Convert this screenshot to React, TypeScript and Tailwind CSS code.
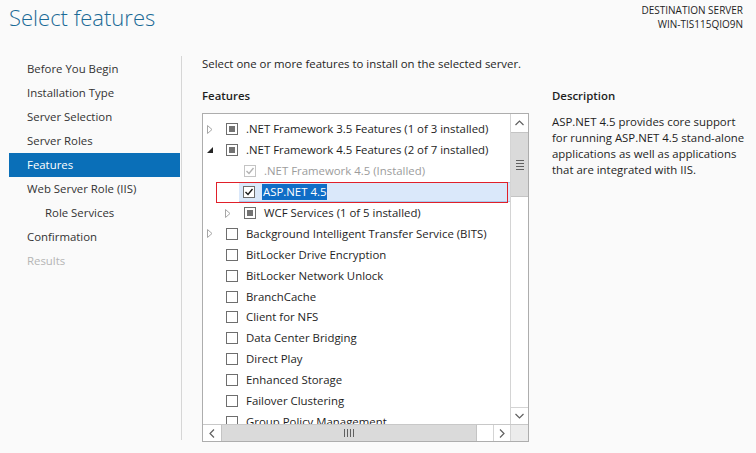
import React from "react";

type Item = {
  label: string;
  level: number;
  expander?: "collapsed" | "expanded";
  state: "empty" | "partial" | "checked" | "checkedDisabled";
  disabled?: boolean;
  selected?: boolean;
};

const navItems = [
  { label: "Before You Begin" },
  { label: "Installation Type" },
  { label: "Server Selection" },
  { label: "Server Roles" },
  { label: "Features", active: true },
  { label: "Web Server Role (IIS)" },
  { label: "Role Services", sub: true },
  { label: "Confirmation" },
  { label: "Results", muted: true },
];

const features: Item[] = [
  { label: ".NET Framework 3.5 Features (1 of 3 installed)", level: 0, expander: "collapsed", state: "partial" },
  { label: ".NET Framework 4.5 Features (2 of 7 installed)", level: 0, expander: "expanded", state: "partial" },
  { label: ".NET Framework 4.5 (Installed)", level: 1, state: "checkedDisabled", disabled: true },
  { label: "ASP.NET 4.5", level: 1, state: "checked", selected: true },
  { label: "WCF Services (1 of 5 installed)", level: 1, expander: "collapsed", state: "partial" },
  { label: "Background Intelligent Transfer Service (BITS)", level: 0, expander: "collapsed", state: "empty" },
  { label: "BitLocker Drive Encryption", level: 0, state: "empty" },
  { label: "BitLocker Network Unlock", level: 0, state: "empty" },
  { label: "BranchCache", level: 0, state: "empty" },
  { label: "Client for NFS", level: 0, state: "empty" },
  { label: "Data Center Bridging", level: 0, state: "empty" },
  { label: "Direct Play", level: 0, state: "empty" },
  { label: "Enhanced Storage", level: 0, state: "empty" },
  { label: "Failover Clustering", level: 0, state: "empty" },
  { label: "Group Policy Management", level: 0, state: "empty" },
];

function Expander({ kind }: { kind?: "collapsed" | "expanded" }) {
  if (!kind) return <span className="w-[19px] shrink-0" />;
  return (
    <span className="w-[19px] shrink-0 flex items-center">
      {kind === "collapsed" ? (
        <svg width="6" height="9" viewBox="0 0 6 9">
          <path d="M0.5 0.5 L5 4.5 L0.5 8.5 Z" fill="none" stroke="#a6a6a6" strokeWidth="1" />
        </svg>
      ) : (
        <svg width="6" height="6" viewBox="0 0 6 6">
          <path d="M6 0 L6 6 L0 6 Z" fill="#262626" />
        </svg>
      )}
    </span>
  );
}

function Checkbox({ state }: { state: Item["state"] }) {
  const disabled = state === "checkedDisabled";
  return (
    <span
      className={`w-[12px] h-[12px] shrink-0 border bg-white flex items-center justify-center ${
        disabled ? "border-[#c4c4c4]" : "border-[#6e6e6e]"
      }`}
    >
      {state === "partial" && <span className="w-[6px] h-[6px] bg-[#737373]" />}
      {(state === "checked" || disabled) && (
        <svg width="10" height="10" viewBox="0 0 10 10">
          <path
            d="M1.5 5 L4 7.5 L8.5 2"
            fill="none"
            stroke={disabled ? "#b3b3b3" : "#1a1a1a"}
            strokeWidth="1.4"
          />
        </svg>
      )}
    </span>
  );
}

function FeatureRow({ item }: { item: Item }) {
  return (
    <div className="h-[20.9px] flex items-center" style={{ paddingLeft: 4 + item.level * 18 }}>
      <Expander kind={item.expander} />
      <div
        className={`flex items-center h-[20px] flex-1 ${
          item.selected ? "bg-[#dae8fa] border-y border-[#a9cbee] -ml-[5px] pl-[4px]" : ""
        }`}
      >
        <Checkbox state={item.state} />
        <span
          className={`ml-[7px] px-[1px] whitespace-nowrap leading-[16px] ${
            item.disabled ? "text-[#9c9c9c]" : "text-[#1e1e1e]"
          } ${item.selected ? "bg-[#0f6dc6] text-white" : ""}`}
        >
          {item.label}
        </span>
      </div>
    </div>
  );
}

function ListBox() {
  return (
    <div className="relative w-[327px] h-[329px] border border-[#adadad] bg-white flex flex-col">
      <div className="flex flex-1 min-h-0">
        <div className="flex-1 overflow-hidden pt-[5px]">
          {features.map((f) => (
            <FeatureRow key={f.label} item={f} />
          ))}
        </div>
        {/* vertical scrollbar */}
        <div className="w-[18px] border-l border-[#d4d4d4] bg-white flex flex-col">
          <div className="h-[18px] flex items-center justify-center">
            <svg width="9" height="6" viewBox="0 0 9 6">
              <path d="M0.5 5 L4.5 1 L8.5 5" fill="none" stroke="#606060" strokeWidth="1.2" />
            </svg>
          </div>
          <div className="h-[65px] bg-[#dadada] border-y border-[#c4c4c4] flex items-center justify-center">
            <div className="flex flex-col gap-[2px]">
              <span className="w-[8px] h-[1px] bg-[#606060]" />
              <span className="w-[8px] h-[1px] bg-[#606060]" />
              <span className="w-[8px] h-[1px] bg-[#606060]" />
              <span className="w-[8px] h-[1px] bg-[#606060]" />
            </div>
          </div>
          <div className="flex-1" />
          <div className="h-[17px] border-t border-[#d4d4d4] flex items-center justify-center">
            <svg width="9" height="6" viewBox="0 0 9 6">
              <path d="M0.5 1 L4.5 5 L8.5 1" fill="none" stroke="#606060" strokeWidth="1.2" />
            </svg>
          </div>
        </div>
      </div>
      {/* horizontal scrollbar */}
      <div className="h-[17px] border-t border-[#c8c8c8] flex">
        <div className="w-[18px] flex items-center justify-center">
          <svg width="6" height="9" viewBox="0 0 6 9">
            <path d="M5 0.5 L1 4.5 L5 8.5" fill="none" stroke="#606060" strokeWidth="1.2" />
          </svg>
        </div>
        <div className="w-[256px] bg-[#dadada] border-x border-[#c4c4c4] flex items-center justify-center">
          <div className="flex gap-[2px]">
            <span className="w-[1px] h-[8px] bg-[#606060]" />
            <span className="w-[1px] h-[8px] bg-[#606060]" />
            <span className="w-[1px] h-[8px] bg-[#606060]" />
            <span className="w-[1px] h-[8px] bg-[#606060]" />
          </div>
        </div>
        <div className="flex-1" />
        <div className="w-[17px] border-l border-[#d4d4d4] flex items-center justify-center">
          <svg width="6" height="9" viewBox="0 0 6 9">
            <path d="M1 0.5 L5 4.5 L1 8.5" fill="none" stroke="#606060" strokeWidth="1.2" />
          </svg>
        </div>
        <div className="w-[18px] bg-[#ececec] border-l border-[#d4d4d4]" />
      </div>
      {/* annotation around selected row */}
      <div className="absolute left-[13px] top-[68px] w-[292px] h-[21px] border border-[#e0202a]" />
    </div>
  );
}

export default function App() {
  return (
    <div
      className="w-[756px] h-[453px] bg-[#fafafa] overflow-hidden text-[11.4px] text-[#1e1e1e]"
      style={{ fontFamily: '"Open Sans", "Noto Sans", sans-serif' }}
    >
      <div className="flex justify-between">
        <h1 className="pl-[9px] pt-[1px] text-[22px] leading-[32px] font-light text-[#1b6a96]">
          Select features
        </h1>
        <div className="pr-[13px] pt-[3px] text-right text-[10px] leading-[14px] text-[#1e1e1e]">
          <div>DESTINATION SERVER</div>
          <div>WIN-TIS115QIO9N</div>
        </div>
      </div>

      <div className="flex mt-[23px]">
        {/* wizard steps */}
        <nav className="w-[182px] h-[384px] border-r border-[#d6d6d6] pl-[9px] pr-[1px] pt-[1px]">
          {navItems.map((n) => (
            <div
              key={n.label}
              className={`h-[24px] flex items-center ${n.sub ? "pl-[36px]" : "pl-[18px]"} ${
                n.active ? "bg-[#0a6fb8] text-white" : n.muted ? "text-[#b5b5b5]" : "text-[#333333]"
              }`}
            >
              {n.label}
            </div>
          ))}
        </nav>

        {/* main content */}
        <div className="pl-[20px] flex-1">
          <p className="leading-[16px]">Select one or more features to install on the selected server.</p>
          <div className="flex gap-[23px] mt-[16px]">
            <div>
              <h2 className="font-semibold leading-[16px] mb-[9px]">Features</h2>
              <ListBox />
            </div>
            <div className="w-[200px]">
              <h2 className="font-semibold leading-[16px] mb-[10px]">Description</h2>
              <p className="leading-[16px]">
                ASP.NET 4.5 provides core support for running ASP.NET 4.5 stand-alone applications as well
                as applications that are integrated with IIS.
              </p>
            </div>
          </div>
        </div>
      </div>
    </div>
  );
}
